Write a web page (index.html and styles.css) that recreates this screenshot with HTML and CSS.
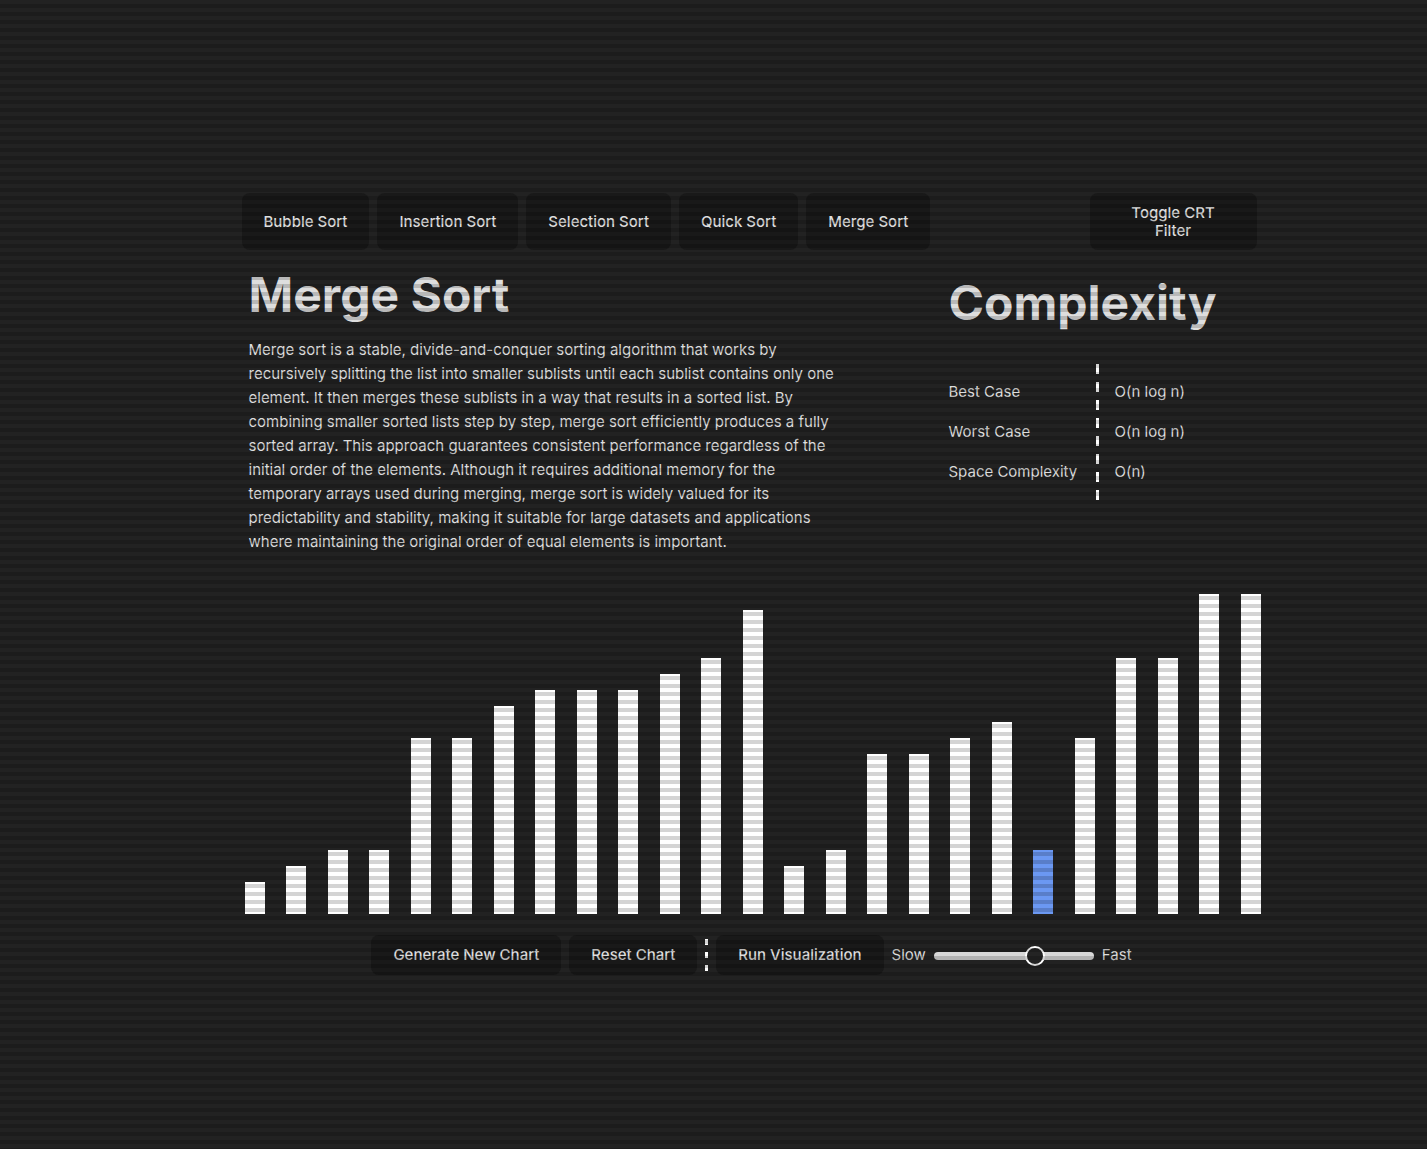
FILE: index.html
```html
<!DOCTYPE html>
<html lang="en">
<head>
  <meta charset="UTF-8">
  <meta name="viewport" content="width=device-width, initial-scale=1.0">
  <title>Sorting Visualizer</title>
  <link rel="stylesheet" href="styles.css">
</head>
<body class="crt">
  <main class="app">
    <nav class="toolbar">
      <button type="button" class="btn">Bubble Sort</button>
      <button type="button" class="btn">Insertion Sort</button>
      <button type="button" class="btn">Selection Sort</button>
      <button type="button" class="btn">Quick Sort</button>
      <button type="button" class="btn">Merge Sort</button>
      <button type="button" class="btn btn-toggle">Toggle CRT Filter</button>
    </nav>

    <div class="info">
      <section class="description">
        <h1 class="title">Merge Sort</h1>
        <p class="text">Merge sort is a stable, divide-and-conquer sorting algorithm that works by recursively splitting the list into smaller sublists until each sublist contains only one element. It then merges these sublists in a way that results in a sorted list. By combining smaller sorted lists step by step, merge sort efficiently produces a fully sorted array. This approach guarantees consistent performance regardless of the initial order of the elements. Although it requires additional memory for the temporary arrays used during merging, merge sort is widely valued for its predictability and stability, making it suitable for large datasets and applications where maintaining the original order of equal elements is important.</p>
      </section>
      <section class="complexity">
        <h1 class="title">Complexity</h1>
        <table class="cases">
          <tbody>
            <tr><th scope="row">Best Case</th><td>O(n log n)</td></tr>
            <tr><th scope="row">Worst Case</th><td>O(n log n)</td></tr>
            <tr><th scope="row">Space Complexity</th><td>O(n)</td></tr>
          </tbody>
        </table>
      </section>
    </div>

    <div class="chart">
      <div class="bar" style="height: 10%"></div>
      <div class="bar" style="height: 15%"></div>
      <div class="bar" style="height: 20%"></div>
      <div class="bar" style="height: 20%"></div>
      <div class="bar" style="height: 55%"></div>
      <div class="bar" style="height: 55%"></div>
      <div class="bar" style="height: 65%"></div>
      <div class="bar" style="height: 70%"></div>
      <div class="bar" style="height: 70%"></div>
      <div class="bar" style="height: 70%"></div>
      <div class="bar" style="height: 75%"></div>
      <div class="bar" style="height: 80%"></div>
      <div class="bar" style="height: 95%"></div>
      <div class="bar" style="height: 15%"></div>
      <div class="bar" style="height: 20%"></div>
      <div class="bar" style="height: 50%"></div>
      <div class="bar" style="height: 50%"></div>
      <div class="bar" style="height: 55%"></div>
      <div class="bar" style="height: 60%"></div>
      <div class="bar bar-active" style="height: 20%"></div>
      <div class="bar" style="height: 55%"></div>
      <div class="bar" style="height: 80%"></div>
      <div class="bar" style="height: 80%"></div>
      <div class="bar" style="height: 100%"></div>
      <div class="bar" style="height: 100%"></div>
    </div>

    <div class="controls">
      <button type="button" class="btn">Generate New Chart</button>
      <button type="button" class="btn">Reset Chart</button>
      <span class="divider"></span>
      <button type="button" class="btn">Run Visualization</button>
      <label for="speed">Slow</label>
      <input type="range" id="speed" class="slider" min="0" max="100" value="65">
      <label for="speed">Fast</label>
    </div>
  </main>
</body>
</html>
```
FILE: styles.css
```css
* {
  box-sizing: border-box;
}

body {
  margin: 0;
  min-height: 100vh;
  padding: 18px 0 0 80px;
  display: flex;
  align-items: center;
  justify-content: center;
  background: #222222;
  color: #dedede;
  font-family: Inter, "Liberation Sans", sans-serif;
  font-size: 15px;
  line-height: 24px;
}

/* CRT scanlines laid over the whole window */
.crt::after {
  content: "";
  position: fixed;
  inset: 0;
  pointer-events: none;
  background: repeating-linear-gradient(
    180deg,
    transparent 0 4px,
    rgba(0, 0, 0, 0.17) 4px 8px
  );
}

.app {
  width: 100%;
  max-width: 1024px;
}

.toolbar {
  display: flex;
  gap: 8px;
  padding-right: 9px;
}

.btn {
  padding: 11px 22px 10px;
  border: 0;
  border-radius: 8px;
  background: #191919;
  color: inherit;
  font: 500 15px/18px Inter, "Liberation Sans", sans-serif;
  cursor: pointer;
}

.btn-toggle {
  width: 167px;
  padding-right: 36px;
  padding-left: 36px;
  margin-left: auto;
}

.info {
  display: grid;
  grid-template-columns: 592px 1fr;
  column-gap: 108px;
  padding: 17px 0 40px 7px;
}

.title {
  margin: 0;
  font-size: 48px;
  font-weight: 700;
  line-height: 56px;
}

.text {
  margin: 15px 0 0;
}

.complexity {
  padding-top: 8px;
}

.cases {
  margin-top: 33px;
  padding: 8px 0;
  border-spacing: 0;
  background: repeating-linear-gradient(#ffffff 0 10px, transparent 10px 18px) 147px 0 / 3px 100% no-repeat;
}

.cases th,
.cases td {
  padding: 8px 0;
  font-weight: 400;
  text-align: left;
}

.cases th {
  width: 147px;
}

.cases td {
  padding-left: 19px;
}

.chart {
  display: flex;
  align-items: flex-end;
  justify-content: space-between;
  height: 320px;
  padding: 0 5px 0 3px;
}

.bar {
  width: 20px;
  background: #ffffff;
}

.bar-active {
  background: #6b98f2;
}

.controls {
  display: flex;
  align-items: center;
  justify-content: center;
  gap: 8px;
  margin-top: 21px;
  padding-right: 4px;
}

.controls .btn {
  min-height: 40px;
  padding-top: 10px;
}

.divider {
  width: 3px;
  height: 32px;
  background: repeating-linear-gradient(#ffffff 0 6px, transparent 6px 13px);
}

.slider {
  appearance: none;
  width: 160px;
  height: 8px;
  margin: 2px 0 0;
  border-radius: 4px;
  background: #d8d8d8;
}

.slider::-webkit-slider-thumb {
  appearance: none;
  width: 20px;
  height: 20px;
  border: 2px solid #ffffff;
  border-radius: 50%;
  background: #242424;
}
```
